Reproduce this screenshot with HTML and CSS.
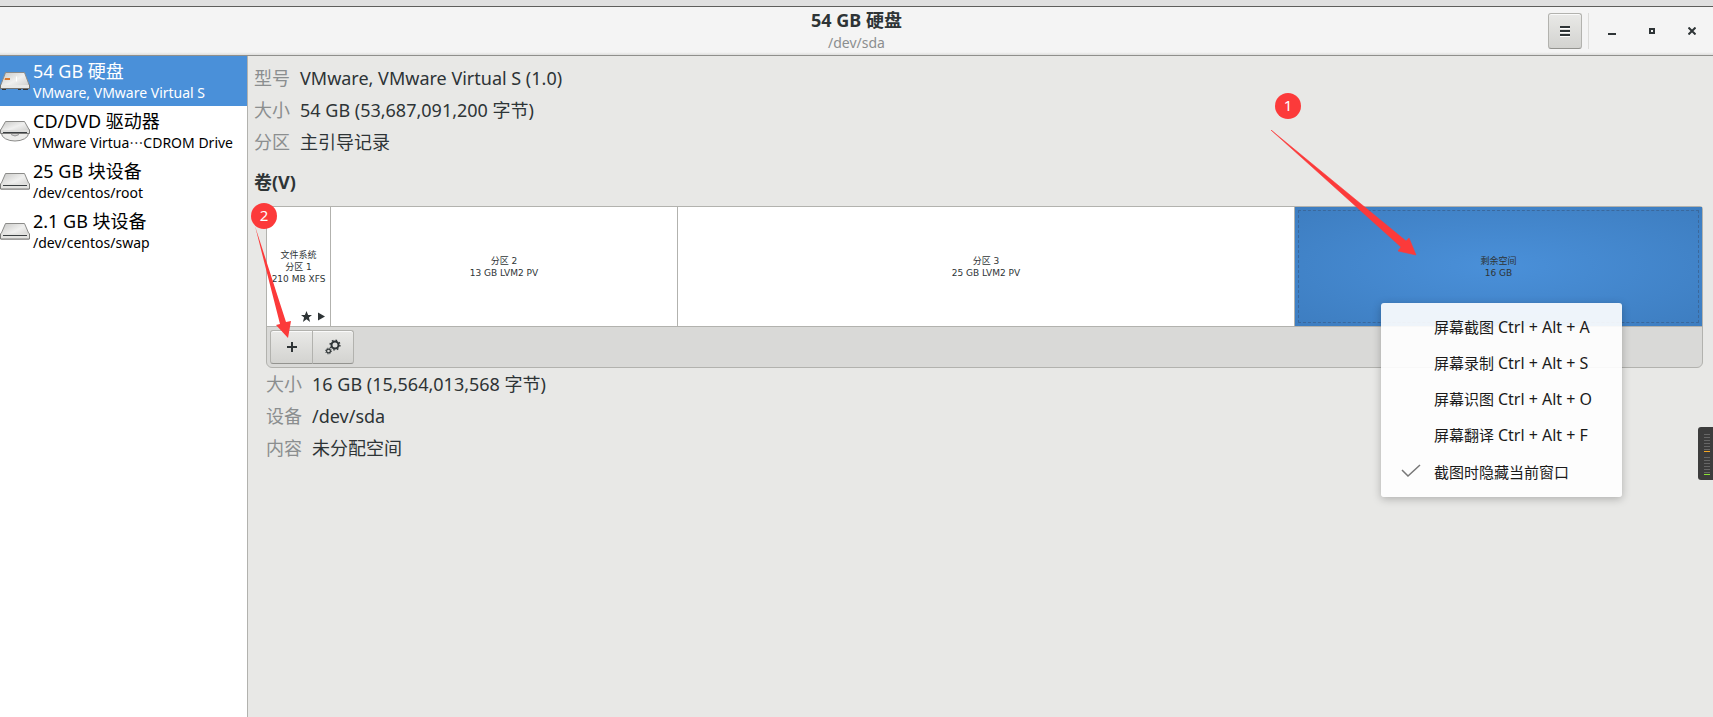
FILE: index.html
```html
<!DOCTYPE html>
<html lang="zh-CN">
<head>
  <meta charset="UTF-8" />
  <meta name="viewport" content="width=device-width, initial-scale=1.0" />
  <title>54 GB 硬盘</title>
  <link rel="stylesheet" href="styles.css">
</head>
<body>

<svg width="0" height="0" class="defs" aria-hidden="true">
  <defs>
    <linearGradient id="metal" x1="0" y1="0" x2="1" y2="1">
      <stop offset="0" stop-color="#c6c6c4" />
      <stop offset="0.5" stop-color="#f0f0ef" />
      <stop offset="1" stop-color="#c9c9c7" />
    </linearGradient>
    <symbol id="drive" viewBox="0 0 30 18">
      <path d="M5.500 1.500h19l4.500 10.500v5h-28v-5z" fill="url(#metal)" stroke="#8b8b89" />
      <path d="M1 11.500h28v5.500H1z" fill="#e3e3e1" />
      <path d="M.5 11.500v5.500h29v-5.500" fill="none" stroke="#7c7c7a" />
      <path d="M3 13.500h24" stroke="#3a3f41" />
    </symbol>
  </defs>
</svg>

<header class="titlebar">
  <div class="title">
    <h1>54 GB 硬盘</h1>
    <p>/dev/sda</p>
  </div>
  <div class="window-buttons">
    <button class="btn menu-btn" aria-label="菜单">
      <svg width="10" height="11" viewBox="0 0 10 11"><path d="M0 1h10M0 5h10M0 9h10" stroke="#2e3436" stroke-width="2" /><path d="M0 2.500h10M0 6.500h10M0 10.500h10" stroke="#fff" /></svg>
    </button>
    <button class="win-btn" aria-label="最小化">
      <svg width="8" height="8" viewBox="0 0 8 8"><path d="M0 7h8" stroke="#2e3436" stroke-width="2" /></svg>
    </button>
    <button class="win-btn" aria-label="最大化">
      <svg width="6" height="6" viewBox="0 0 6 6"><path d="M1 1h4v4H1z" fill="none" stroke="#2e3436" stroke-width="2" /></svg>
    </button>
    <button class="win-btn" aria-label="关闭">
      <svg width="8" height="8" viewBox="0 0 8 8"><path d="M.5.5l7 7M7.500.5l-7 7" stroke="#2e3436" stroke-width="2" /></svg>
    </button>
  </div>
</header>

<div class="window">
  <nav class="sidebar">
    <a class="device selected" href="#sda">
      <svg width="30" height="20" viewBox="0 0 30 20">
        <path d="M5.500 1.500h19l4.500 12v4h-28v-4z" fill="url(#metal)" stroke="#8b8b89" />
        <path d="M1 14h28v3H1z" fill="#e8e8e6" />
        <path d="M.5 13.500v4h29v-4" fill="none" stroke="#757573" />
        <path d="M2 18.500h4M18 18.500h3M23 18.500h5" stroke="#333" />
        <path d="M5 7h5v2H4.500z" fill="#d9772c" />
        <path d="M16.500 5.500v5" stroke="#fff" />
      </svg>
      <span class="device-text"><strong>54 GB 硬盘</strong><small>VMware, VMware Virtual S</small></span>
    </a>
    <a class="device" href="#cdrom">
      <svg width="30" height="22" viewBox="0 0 30 22">
        <ellipse cx="15" cy="13.500" rx="13.500" ry="7.500" fill="#ececea" stroke="#8b8b89" />
        <path d="M5.500 1.500h19l4.500 8v3h-28v-3z" fill="url(#metal)" stroke="#8b8b89" />
        <path d="M1 10h28v3H1z" fill="#dededc" />
        <path d="M.5 9.500v4h29v-4" fill="none" stroke="#7c7c7a" />
        <path d="M3 12.500h24" stroke="#3a3f41" />
        <path d="M11 14.500q4 3 8 0" fill="#bbb" stroke="#999" />
      </svg>
      <span class="device-text"><strong>CD/DVD 驱动器</strong><small>VMware Virtua⋯CDROM Drive</small></span>
    </a>
    <a class="device" href="#root">
      <svg width="30" height="18"><use href="#drive" /></svg>
      <span class="device-text"><strong>25 GB 块设备</strong><small>/dev/centos/root</small></span>
    </a>
    <a class="device" href="#swap">
      <svg width="30" height="18"><use href="#drive" /></svg>
      <span class="device-text"><strong>2.1 GB 块设备</strong><small>/dev/centos/swap</small></span>
    </a>
  </nav>

  <main class="content">
    <dl class="details">
      <dt>型号</dt><dd>VMware, VMware Virtual S (1.0)</dd>
      <dt>大小</dt><dd>54 GB (53,687,091,200 字节)</dd>
      <dt>分区</dt><dd>主引导记录</dd>
    </dl>

    <h2>卷(V)</h2>

    <section class="volumes">
      <div class="volume-grid">
        <div class="volume">
          <p>文件系统</p>
          <p>分区 1</p>
          <p>210 MB XFS</p>
          <svg class="marks" width="24" height="11" viewBox="0 0 24 11"><path d="M5.500 0l1.600 3.900H11L7.900 6.400 9.100 11 5.500 8.300 1.900 11l1.200-4.600L0 3.900h3.900z" fill="#2e3436" /><path d="M17 1.500v8l7-4z" fill="#2e3436" /></svg>
        </div>
        <div class="volume">
          <p>分区 2</p>
          <p>13 GB LVM2 PV</p>
        </div>
        <div class="volume">
          <p>分区 3</p>
          <p>25 GB LVM2 PV</p>
        </div>
        <div class="volume free">
          <p>剩余空间</p>
          <p>16 GB</p>
        </div>
      </div>
      <div class="toolbar">
        <button class="btn" aria-label="创建分区">
          <svg width="10" height="10" viewBox="0 0 10 10"><path d="M5 0v10M0 5h10" stroke="#2e3436" stroke-width="2" /></svg>
        </button>
        <button class="btn" aria-label="更多操作">
          <svg width="16" height="16" viewBox="0 0 16 16" fill="none" stroke="#2e3436">
            <circle cx="10" cy="6" r="3.500" stroke-width="2" />
            <circle cx="10" cy="6" r="4.900" stroke-width="1.400" stroke-dasharray="1.600 2.248" />
            <circle cx="3.500" cy="12" r="1.900" stroke-width="1.200" />
            <circle cx="3.500" cy="12" r="2.900" stroke-dasharray="1.100 1.177" />
          </svg>
        </button>
      </div>

      <div class="badge badge-two">2</div>
      <svg class="arrow arrow-two" width="37" height="113" viewBox="0 0 37 113"><path d="M0 0L25 98l-4 1 12 13 3-17-5 1z" fill="#fc3a3a" /></svg>
      <div class="badge badge-one">1</div>
      <svg class="arrow arrow-one" width="146" height="126" viewBox="0 0 146 126"><path d="M0 0L135 111l3-3 7 17-18-4 3-4z" fill="#fc3a3a" stroke="#fc3a3a" stroke-width=".6" /></svg>

      <div class="popup">
        <button>屏幕截图 <kbd>Ctrl + Alt + A</kbd></button>
        <button>屏幕录制 <kbd>Ctrl + Alt + S</kbd></button>
        <button>屏幕识图 <kbd>Ctrl + Alt + O</kbd></button>
        <button>屏幕翻译 <kbd>Ctrl + Alt + F</kbd></button>
        <button>
          <svg width="20" height="14" viewBox="0 0 20 14"><path d="M1 6l6 6L19 1" fill="none" stroke="#777" stroke-width="1.500" /></svg>
          截图时隐藏当前窗口
        </button>
      </div>
    </section>

    <dl class="details volume-details">
      <dt>大小</dt><dd>16 GB (15,564,013,568 字节)</dd>
      <dt>设备</dt><dd>/dev/sda</dd>
      <dt>内容</dt><dd>未分配空间</dd>
    </dl>
  </main>
</div>

<div class="meter">
  <span class="bar orange"></span>
  <span class="bar green"></span>
</div>

</body>
</html>
```

FILE: styles.css
```css
* {
  box-sizing: border-box;
}
body {
  margin: 0;
  min-height: 100vh;
  display: flex;
  flex-direction: column;
  border-top: 6px solid #e0e0e0;
  background-color: #e8e8e6;
  font-family: "Noto Sans", "Noto Sans CJK SC", sans-serif;
  font-size: 18px;
  color: #2e3436;
}
h1, h2, p, dl, dd {
  margin: 0;
}
button, kbd {
  font: inherit;
  color: inherit;
}
button {
  cursor: pointer;
}
.defs {
  position: absolute;
}

/* title bar */
.titlebar {
  display: grid;
  grid-template-columns: 1fr auto 1fr;
  height: 50px;
  border-top: 1px solid #5e5e5c;
  border-bottom: 1px solid #8f8f8c;
  background: linear-gradient(#f4f4f4 94%, #dededc);
}
.title {
  grid-column: 2;
  text-align: center;
}
.title h1 {
  font-size: 18px;
  line-height: 26px;
}
.title p {
  font-size: 14px;
  line-height: 20px;
  color: #8b8e8f;
}
.window-buttons {
  display: flex;
  align-items: center;
  justify-content: flex-end;
  padding-right: 1px;
}
.btn {
  display: flex;
  align-items: center;
  justify-content: center;
  padding: 0;
  border: 1px solid #b2b2ae;
  border-bottom-color: #93938f;
  border-radius: 3px;
  background: linear-gradient(#e9e9e7, #d3d3d0);
  box-shadow: inset 0 1px #fafafa;
}
.menu-btn {
  width: 34px;
  height: 36px;
  margin-right: 6px;
}
.win-btn {
  display: flex;
  align-items: center;
  justify-content: center;
  width: 40px;
  height: 36px;
  padding: 0;
  border: none;
  background: none;
}
.menu-btn + .win-btn {
  width: 44px;
  padding-left: 3px;
  border-left: 1px solid #dcdcda;
}

/* device list */
.window {
  flex: 1;
  display: flex;
}
.sidebar {
  width: 248px;
  flex-shrink: 0;
  border-right: 1px solid #b2b2ae;
  background-color: #fff;
}
.device {
  display: flex;
  align-items: center;
  gap: 3px;
  height: 50px;
  color: #000;
  text-decoration: none;
  white-space: nowrap;
}
.device svg {
  flex-shrink: 0;
}
.selected {
  background-color: #4a90d9;
  color: #fff;
}
.device-text strong {
  display: block;
  font-weight: normal;
  line-height: 24px;
}
.device-text small {
  display: block;
  font-size: 14px;
  line-height: 20px;
}

/* drive details */
.content {
  flex: 1;
  padding: 6px 10px 0 6px;
}
.details {
  display: grid;
  grid-template-columns: auto 1fr;
  column-gap: 10px;
  line-height: 32px;
}
.details dt {
  color: #8b8e8f;
}
.content h2 {
  padding: 10px 0;
  font-size: 18px;
  line-height: 28px;
}
.volume-details {
  margin-left: 12px;
}

/* volumes */
.volumes {
  position: relative;
  margin-left: 12px;
  border: 1px solid #b2b2ae;
  border-radius: 3px 3px 6px 6px;
  background-color: #d9d9d7;
}
.volume-grid {
  display: grid;
  grid-template-columns: 64fr 347fr 617fr 407fr;
  height: 120px;
  border-bottom: 1px solid #b2b2ae;
}
.volume {
  position: relative;
  display: flex;
  flex-direction: column;
  justify-content: center;
  align-items: center;
  border-right: 1px solid #b2b2ae;
  background-color: #fff;
  font-family: "DejaVu Sans", "Noto Sans CJK SC", sans-serif;
  font-size: 9px;
  line-height: 12px;
  white-space: nowrap;
}
.volume:last-child {
  border-right: none;
}
.free {
  background: radial-gradient(#4a90d9, #3d7dc0);
}
.free::after {
  content: "";
  position: absolute;
  inset: 3px;
  border: 1px dashed #3a689c;
}
.marks {
  position: absolute;
  right: 5px;
  bottom: 4px;
}
.toolbar {
  display: flex;
  padding: 3px;
}
.toolbar .btn {
  width: 43px;
  height: 34px;
}
.toolbar .btn:first-child {
  border-radius: 3px 0 0 3px;
}
.toolbar .btn:last-child {
  width: 42px;
  margin-left: -1px;
  border-radius: 0 3px 3px 0;
}

/* numbered pointers */
.badge {
  position: absolute;
  width: 26px;
  height: 26px;
  border-radius: 50%;
  background-color: #fc3a3a;
  color: #fff;
  font-size: 15px;
  line-height: 24px;
  text-align: center;
}
.arrow {
  position: absolute;
}
.badge-one {
  top: -114px;
  right: 401px;
}
.badge-two {
  top: -4px;
  left: -16px;
}
.arrow-one {
  top: -77px;
  right: 285px;
}
.arrow-two {
  top: 19px;
  left: -12px;
}

/* popup menu */
.popup {
  position: absolute;
  top: 96px;
  right: 80px;
  width: 241px;
  padding: 6px 0 8px;
  border-radius: 3px;
  background-color: rgba(255, 255, 255, 0.91);
  box-shadow: 0 2px 8px rgba(0, 0, 0, 0.25);
}
.popup button {
  position: relative;
  display: block;
  width: 100%;
  height: 36px;
  padding: 0 0 0 53px;
  border: none;
  background: none;
  color: #1a1a1a;
  font-size: 15px;
  text-align: left;
  white-space: nowrap;
}
.popup kbd {
  font-size: 16px;
}
.popup svg {
  position: absolute;
  left: 20px;
  top: 11px;
}

/* level meter on the screen edge */
.meter {
  position: fixed;
  top: 427px;
  right: 0;
  display: flex;
  flex-direction: column;
  gap: 5px;
  width: 15px;
  height: 53px;
  padding: 7px 3px 0 6px;
  border-radius: 3px 0 0 3px;
  background-color: #3c3c3c;
}
.bar {
  height: 18px;
  background: repeating-linear-gradient(#666 0 1px, transparent 1px 3px);
  border-bottom: 1px solid;
}
.orange {
  border-color: #f5a623;
}
.green {
  border-color: #8ae234;
}
```
